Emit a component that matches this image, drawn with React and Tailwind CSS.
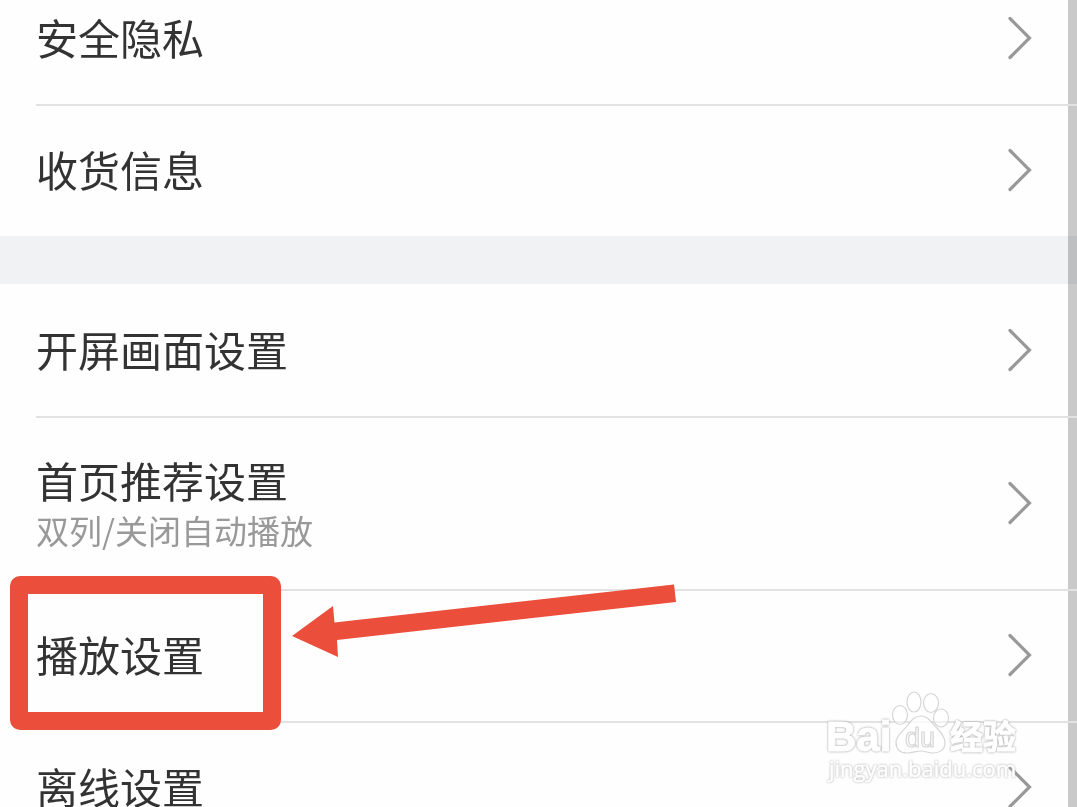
import { clsx } from 'clsx'

const SECTIONS = [
  [
    { id: 'privacy', title: '安全隐私' },
    { id: 'address', title: '收货信息' },
  ],
  [
    { id: 'splash', title: '开屏画面设置' },
    { id: 'feed', title: '首页推荐设置', detail: '双列/关闭自动播放' },
    { id: 'playback', title: '播放设置', marked: true },
    { id: 'offline', title: '离线设置' },
  ],
]

function Chevron() {
  return (
    <svg
      className="h-12 w-6 shrink-0"
      viewBox="0 0 24 48"
      fill="none"
      stroke="#999999"
      strokeWidth="3.200"
      strokeLinecap="round"
      strokeLinejoin="miter"
      aria-hidden="true"
    >
      <path d="M2 3.500 L21.500 23 L2 42.500" />
    </svg>
  )
}

// Red frame and arrow pointing at the highlighted row
function Marker() {
  return (
    <>
      <div className="pointer-events-none absolute -top-[15px] left-[10px] h-[154px] w-[271px] rounded-[10px] border-[18px] border-[#eb4e3a]" />
      <svg
        className="pointer-events-none absolute -top-[15px] left-[290px] h-[90px] w-[390px]"
        viewBox="0 0 390 90"
        fill="#eb4e3a"
        aria-hidden="true"
      >
        <path d="M2 60 L43 30 L44.500 46.500 L384 8.500 L386 26 L47 64 L48 81 Z" />
      </svg>
    </>
  )
}

function Row({ item, last }) {
  return (
    <li className="relative pl-9">
      <button
        type="button"
        className={clsx(
          'flex w-full items-center justify-between pr-[45px] text-left',
          item.detail ? 'h-[173px]' : last ? 'h-[130px]' : 'h-[132px]',
          !last && 'border-b-2 border-[#e2e2e2]'
        )}
      >
        <span className="flex flex-col pb-1">
          <span className="text-[42px] leading-[56px] text-[#333333]">{item.title}</span>
          {item.detail && (
            <span className="text-[33px] leading-[44px] text-[#999999]">{item.detail}</span>
          )}
        </span>
        <Chevron />
      </button>
      {item.marked && <Marker />}
    </li>
  )
}

function Watermark() {
  return (
    <svg
      className="pointer-events-none absolute top-[685px] right-[52px] h-[110px] w-[205px]"
      viewBox="0 0 205 110"
      fill="#ffffff"
      strokeLinejoin="round"
      role="img"
      aria-label="Baidu"
    >
      <g stroke="#d6d6d6" strokeWidth="1.200">
        <g fillOpacity="0.5">
          <ellipse cx="80" cy="30" rx="7.500" ry="9.500" />
          <ellipse cx="94" cy="17" rx="7" ry="10" />
          <ellipse cx="111" cy="18" rx="7.500" ry="9.500" />
          <ellipse cx="121" cy="33" rx="7.500" ry="9" />
        </g>
        <path
          fillOpacity="0.8"
          d="M101 31 C108 31 111 37 116 42 C121 47 125 52 125 58 C125 65 119 68 113 68 C108 68 106 66 101 66 C96 66 93 68 87 68 C80 68 76 64 76 57 C76 51 83 46 87 41 C91 36 94 31 101 31 Z"
        />
        <text x="85" y="62" fontSize="27" fontFamily="Liberation Sans, sans-serif">
          du
        </text>
      </g>
      <g className="drop-shadow-[0_0_1px_#999999]" stroke="#ffffff" strokeWidth="1">
        <text x="6" y="66" fontSize="42" fontWeight="700" fontFamily="Liberation Sans, sans-serif">
          Bai
        </text>
        <text x="130" y="64" fontSize="33" fontWeight="700" fontFamily="Noto Sans CJK SC, sans-serif">
          经验
        </text>
      </g>
      <g className="drop-shadow-[0_0_1px_#aaaaaa]" stroke="#ffffff" strokeWidth="0.500">
        <text x="9" y="92" fontSize="22" fontFamily="Open Sans, sans-serif">
          jingyan.baidu.com
        </text>
      </g>
    </svg>
  )
}

export default function App() {
  return (
    <main className="relative h-screen overflow-hidden bg-[#fefefe] font-['Noto_Sans_CJK_SC',sans-serif]">
      <div className="absolute inset-y-0 right-0 w-[9px] bg-[#c9c9c9]" />
      <div className="relative -mt-[26px]">
        {SECTIONS.map((items, index) => (
          <section key={items[0].id}>
            {index > 0 && <div className="mb-0.5 h-12 bg-[#f1f3f4] mix-blend-multiply" />}
            <ul>
              {items.map((item, i) => (
                <Row key={item.id} item={item} last={i === items.length - 1} />
              ))}
            </ul>
          </section>
        ))}
      </div>
      <Watermark />
    </main>
  )
}
